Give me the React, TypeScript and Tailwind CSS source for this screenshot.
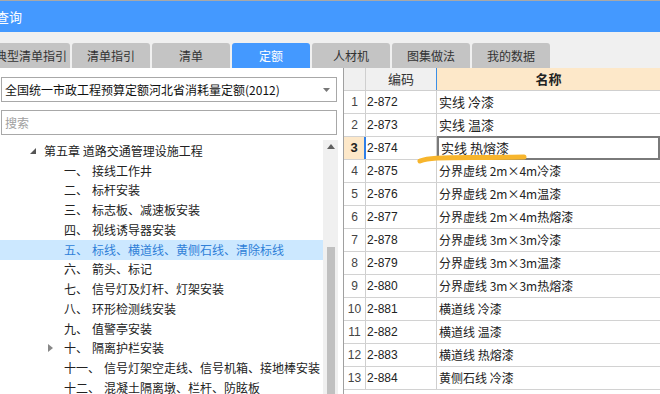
import React from 'react';

const tabs = ['典型清单指引', '清单指引', '清单', '定额', '人材机', '图集做法', '我的数据'];

const tree = [
  { no: '一、', text: '接线工作井' },
  { no: '二、', text: '标杆安装' },
  { no: '三、', text: '标志板、减速板安装' },
  { no: '四、', text: '视线诱导器安装' },
  { no: '五、', text: '标线、横道线、黄侧石线、清除标线', active: true },
  { no: '六、', text: '箭头、标记' },
  { no: '七、', text: '信号灯及灯杆、灯架安装' },
  { no: '八、', text: '环形检测线安装' },
  { no: '九、', text: '值警亭安装' },
  { no: '十、', text: '隔离护栏安装', folded: true },
  { no: '十一、', text: '信号灯架空走线、信号机箱、接地棒安装' },
  { no: '十二、', text: '混凝土隔离墩、栏杆、防眩板' },
];

const rows = [
  { code: '2-872', name: '实线 冷漆' },
  { code: '2-873', name: '实线 温漆' },
  { code: '2-874', name: '实线 热熔漆' },
  { code: '2-875', name: '分界虚线 2m×4m冷漆' },
  { code: '2-876', name: '分界虚线 2m×4m温漆' },
  { code: '2-877', name: '分界虚线 2m×4m热熔漆' },
  { code: '2-878', name: '分界虚线 3m×3m冷漆' },
  { code: '2-879', name: '分界虚线 3m×3m温漆' },
  { code: '2-880', name: '分界虚线 3m×3m热熔漆' },
  { code: '2-881', name: '横道线 冷漆' },
  { code: '2-882', name: '横道线 温漆' },
  { code: '2-883', name: '横道线 热熔漆' },
  { code: '2-884', name: '黄侧石线 冷漆' },
];

export default function App() {
  return (
    <div className="relative w-[660px] h-[394px] overflow-hidden bg-white font-['Noto_Sans_CJK_SC',sans-serif] text-[#222]">
      {/* Title bar */}
      <div className="h-[32px] border-t border-[#a8a8a8] bg-[#4499ff] flex items-center">
        <span className="ml-[-4px] text-[13px] text-white leading-none">查询</span>
      </div>

      {/* Tabs */}
      <div className="h-[36px] bg-[#f0f0f0] pt-[11px] flex gap-[2px] ml-[-8px]">
        {tabs.map((t) => (
          <div
            key={t}
            className={`w-[78px] h-[25px] shrink-0 rounded-t-[3px] flex items-center justify-center text-[12px] ${
              t === '定额' ? 'bg-[#4499ff] text-white' : 'bg-[#c4c4c4] text-[#333]'
            }`}
          >
            {t}
          </div>
        ))}
      </div>

      <div className="flex h-[326px]">
        {/* Left panel */}
        <div className="w-[343px] flex flex-col text-[12px]">
          <div className="mt-[9px] ml-[1px] w-[336px] h-[25px] border border-[#a8a8a8] flex items-center justify-between pl-[3px] pr-[6px]">
            <span className="text-[#111]">全国统一市政工程预算定额河北省消耗量定额(2012)</span>
            <svg width="7" height="4" viewBox="0 0 7 4"><path d="M0 0h7L3.5 4z" fill="#777" /></svg>
          </div>
          <div className="mt-[8px] ml-[1px] w-[336px] h-[25px] border border-[#a8a8a8] flex items-center pl-[3px]">
            <span className="text-[#a0a0a0]">搜索</span>
          </div>

          <div className="mt-[5px] flex flex-1 min-h-0">
            <div className="w-[323px] pt-[1px] overflow-hidden">
              <div className="h-[19.75px] flex items-center">
                <svg className="ml-[30px] mr-[8px] shrink-0" width="6" height="6" viewBox="0 0 6 6"><path d="M6 0v6H0z" fill="#555" /></svg>
                <span>第五章 道路交通管理设施工程</span>
              </div>
              {tree.map((n) => (
                <div
                  key={n.no}
                  className={`h-[19.75px] flex items-center whitespace-nowrap ${n.active ? 'bg-[#cce8ff] text-[#2f7fd8]' : ''}`}
                >
                  <div className="w-[64px] shrink-0 flex justify-end pr-[11px]">
                    {n.folded && (
                      <svg width="5" height="8" viewBox="0 0 5 8"><path d="M0 0l5 4-5 4z" fill="#888" /></svg>
                    )}
                  </div>
                  <span className="shrink-0">{n.no}</span>
                  <span className={n.no.length > 2 ? 'ml-[4px]' : 'ml-[4px]'}>{n.text}</span>
                </div>
              ))}
            </div>
            {/* Scrollbar */}
            <div className="w-[15px] bg-[#f0f0f0] flex flex-col items-center">
              <svg className="mt-[4px]" width="8" height="5" viewBox="0 0 8 5"><path d="M0 5L4 0l4 5z" fill="#606060" /></svg>
              <div className="mt-[98px] w-[8px] flex-1 bg-[#c0c0c0]" />
            </div>
          </div>
        </div>

        {/* Right grid */}
        <div className="flex-1 border-l border-[#a0a0a0] text-[12px]">
          <div className="flex h-[23px] border-b border-[#cfcfcf]">
            <div className="w-[22px] bg-[#f0f0f0] border-r border-[#cfcfcf]" />
            <div className="w-[71px] bg-[#f0f0f0] border-r border-[#3a8ee6] flex items-center justify-center text-[13px] text-[#333]">编码</div>
            <div className="flex-1 bg-[#fde8c9] flex items-center justify-center text-[13px] font-bold text-[#222]">名称</div>
          </div>
          {rows.map((r, i) => {
            const sel = i === 2;
            return (
              <div key={r.code} className="flex h-[23px] border-b border-[#d2d2d2]">
                <div
                  className={`w-[22px] border-r flex items-center justify-center font-['Liberation_Sans',sans-serif] ${
                    sel ? 'bg-[#fde8c9] border-r-2 border-[#2f7fe8] font-bold text-[13px]' : 'border-[#cfcfcf] text-[#444]'
                  }`}
                >
                  {i + 1}
                </div>
                <div className="w-[71px] border-r border-[#cfcfcf] flex items-center pl-[1px] font-['Liberation_Sans',sans-serif] text-[#222]">
                  {r.code}
                </div>
                <div
                  className={`flex-1 flex items-center pl-[2px] ${i < 3 ? 'text-[13px]' : 'text-[12px]'} ${
                    sel ? 'border-2 border-[#7a7a7a] -mt-[1px] h-[24px]' : ''
                  }`}
                >
                  {r.name}
                </div>
              </div>
            );
          })}
        </div>
      </div>

      {/* hand-drawn highlight stroke */}
      <svg className="absolute left-0 top-0 pointer-events-none" width="660" height="394">
        <path d="M420 161 C 428 158, 440 157.5, 470 157.5 S 515 157, 524 157" stroke="#f7b52c" strokeWidth="5" strokeLinecap="round" fill="none" />
      </svg>
    </div>
  );
}
